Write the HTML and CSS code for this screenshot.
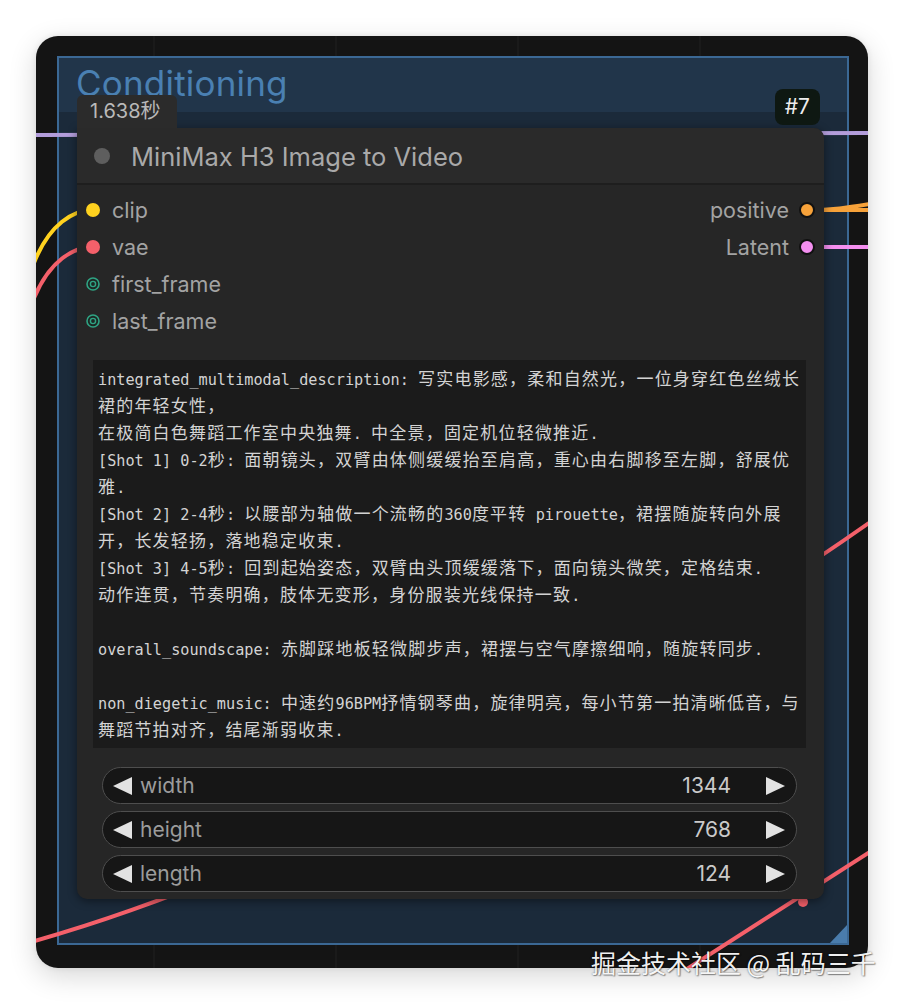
FILE: index.html
```html
<!DOCTYPE html>
<html lang="zh">
<head>
<meta charset="utf-8">
<title>MiniMax H3 Image to Video</title>
<link rel="stylesheet" href="styles.css">
</head>
<body>
<div class="page">
  <div class="frame">
    <div class="group">
      <div class="group-title">Conditioning</div>
      <div class="group-handle"></div>
    </div>

    <svg class="links" width="832" height="932" viewBox="0 0 832 932">
      <path d="M-5 99 L840 97" stroke="#b39ddb" stroke-width="4" fill="none"/>
      <path d="M57 174 C40 174, 12 185, -5 235" stroke="#ffd21f" stroke-width="4" fill="none"/>
      <path d="M57 211 C40 211, 12 222, -5 270" stroke="#f4606a" stroke-width="4" fill="none"/>
      <path d="M771 174 L840 174" stroke="#f7a23a" stroke-width="4" fill="none"/>
      <path d="M771 174 C800 174, 815 171, 840 167" stroke="#f7a23a" stroke-width="4" fill="none"/>
      <path d="M771 211 L840 211" stroke="#f48ff0" stroke-width="4" fill="none"/>
      <path d="M-5 906 C250 835, 600 652, 840 482" stroke="#f4606a" stroke-width="4" fill="none"/>
      <path d="M640 940 L840 812" stroke="#f4606a" stroke-width="4" fill="none"/>
      <circle cx="767" cy="866" r="5" fill="#f4606a"/>
    </svg>

    <div class="node">
      <div class="node-head">
        <div class="timing">1.638秒</div>
        <div class="node-id">#7</div>
      </div>
      <div class="node-box">
        <div class="node-title">
          <span class="title-dot"></span>
          <span class="title-text">MiniMax H3 Image to Video</span>
        </div>
        <div class="node-body">
          <div class="slots">
            <div class="inputs">
              <div class="slot"><span class="dot dot-clip"></span><span class="slot-label">clip</span></div>
              <div class="slot"><span class="dot dot-vae"></span><span class="slot-label">vae</span></div>
              <div class="slot">
                <svg class="ring" width="16" height="16" viewBox="0 0 16 16"><circle cx="8" cy="8" r="6" fill="#1d2824" stroke="#2fa383" stroke-width="1.6"/><circle cx="8" cy="8" r="2.6" fill="none" stroke="#2fa383" stroke-width="1.4"/></svg>
                <span class="slot-label">first_frame</span>
              </div>
              <div class="slot">
                <svg class="ring" width="16" height="16" viewBox="0 0 16 16"><circle cx="8" cy="8" r="6" fill="#1d2824" stroke="#2fa383" stroke-width="1.6"/><circle cx="8" cy="8" r="2.6" fill="none" stroke="#2fa383" stroke-width="1.4"/></svg>
                <span class="slot-label">last_frame</span>
              </div>
            </div>
            <div class="outputs">
              <div class="slot"><span class="slot-label">positive</span><span class="odot odot-pos"></span></div>
              <div class="slot"><span class="slot-label">Latent</span><span class="odot odot-lat"></span></div>
            </div>
          </div>

          <div class="textarea">
<div class="ln">integrated_multimodal_description: <span class="c">写实电影感，柔和自然光，一位身穿红色丝绒长</span></div>
<div class="ln"><span class="c">裙的年轻女性，</span></div>
<div class="ln"><span class="c">在极简白色舞蹈工作室中央独舞</span>. <span class="c">中全景，固定机位轻微推近</span>.</div>
<div class="ln">[Shot 1] 0-2<span class="c">秒</span>: <span class="c">面朝镜头，双臂由体侧缓缓抬至肩高，重心由右脚移至左脚，舒展优</span></div>
<div class="ln"><span class="c">雅</span>.</div>
<div class="ln">[Shot 2] 2-4<span class="c">秒</span>: <span class="c">以腰部为轴做一个流畅的</span>360<span class="c">度平转</span> pirouette<span class="c">，裙摆随旋转向外展</span></div>
<div class="ln"><span class="c">开，长发轻扬，落地稳定收束</span>.</div>
<div class="ln">[Shot 3] 4-5<span class="c">秒</span>: <span class="c">回到起始姿态，双臂由头顶缓缓落下，面向镜头微笑，定格结束</span>.</div>
<div class="ln"><span class="c">动作连贯，节奏明确，肢体无变形，身份服装光线保持一致</span>.</div>
<div class="ln"> </div>
<div class="ln">overall_soundscape: <span class="c">赤脚踩地板轻微脚步声，裙摆与空气摩擦细响，随旋转同步</span>.</div>
<div class="ln"> </div>
<div class="ln">non_diegetic_music: <span class="c">中速约</span>96BPM<span class="c">抒情钢琴曲，旋律明亮，每小节第一拍清晰低音，与</span></div>
<div class="ln"><span class="c">舞蹈节拍对齐，结尾渐弱收束</span>.</div>
          </div>

          <div class="widgets">
            <div class="widget">
              <svg class="arrow" width="19" height="18" viewBox="0 0 19 18"><polygon points="0,9 19,0 19,18" fill="#e2e2e2"/></svg>
              <span class="w-label">width</span>
              <span class="w-value">1344</span>
              <svg class="arrow" width="19" height="18" viewBox="0 0 19 18"><polygon points="19,9 0,0 0,18" fill="#e2e2e2"/></svg>
            </div>
            <div class="widget">
              <svg class="arrow" width="19" height="18" viewBox="0 0 19 18"><polygon points="0,9 19,0 19,18" fill="#e2e2e2"/></svg>
              <span class="w-label">height</span>
              <span class="w-value">768</span>
              <svg class="arrow" width="19" height="18" viewBox="0 0 19 18"><polygon points="19,9 0,0 0,18" fill="#e2e2e2"/></svg>
            </div>
            <div class="widget">
              <svg class="arrow" width="19" height="18" viewBox="0 0 19 18"><polygon points="0,9 19,0 19,18" fill="#e2e2e2"/></svg>
              <span class="w-label">length</span>
              <span class="w-value">124</span>
              <svg class="arrow" width="19" height="18" viewBox="0 0 19 18"><polygon points="19,9 0,0 0,18" fill="#e2e2e2"/></svg>
            </div>
          </div>
        </div>
      </div>
    </div>
  </div>
  <div class="watermark">掘金技术社区 @ 乱码三千</div>
</div>
</body>
</html>
```

FILE: styles.css
```css
html, body {
  margin: 0;
  padding: 0;
  background: #ffffff;
}

body {
  width: 904px;
  height: 1004px;
  overflow: hidden;
  font-family: Inter, "Noto Sans CJK SC", sans-serif;
}

.page {
  position: relative;
  box-sizing: border-box;
  width: 904px;
  height: 1004px;
  padding: 36px 0 0 36px;
}

.frame {
  position: relative;
  width: 832px;
  height: 932px;
  border-radius: 22px;
  overflow: hidden;
  background-color: #141414;
  background-image: linear-gradient(90deg, rgba(255, 255, 255, 0.025) 0 2px, transparent 2px);
  background-size: 182px 100%;
  background-position: 117px 0;
  box-shadow: 0 8px 28px rgba(0, 0, 0, 0.16), 0 0 6px rgba(0, 0, 0, 0.08);
}

/* group */
.group {
  position: absolute;
  left: 21px;
  top: 20px;
  width: 792px;
  height: 889px;
  box-sizing: border-box;
  border: 2px solid #3b6894;
  background: linear-gradient(#21354a 0 54px, #1b2a3a 54px);
}

.group-title {
  padding: 4px 0 0 17px;
  font-size: 35px;
  line-height: 42px;
  color: #4a80b2;
  letter-spacing: 0.2px;
}

.group-handle {
  position: absolute;
  right: 0;
  bottom: 0;
  width: 17px;
  height: 18px;
  background: #4a7cac;
  clip-path: polygon(100% 0, 100% 100%, 0 100%);
}

.links {
  position: absolute;
  left: 0;
  top: 0;
  overflow: visible;
}

/* node */
.node {
  position: absolute;
  left: 41px;
  top: 53px;
  width: 747px;
}

.node-head {
  display: flex;
  align-items: flex-end;
  justify-content: space-between;
  height: 39px;
}

.timing {
  height: 33px;
  box-sizing: border-box;
  padding: 0 16px 0 13px;
  background: #2b2b2b;
  border-radius: 6px 6px 0 0;
  color: #b9b9b9;
  font-size: 20px;
  line-height: 33px;
}

.node-id {
  height: 36px;
  margin: 0 4px 3px 0;
  padding: 0 10px;
  background: #0e1812;
  border-radius: 8px;
  color: #ededed;
  font-size: 21px;
  line-height: 36px;
}

.node-box {
  background: #262626;
  border-radius: 0 10px 10px 10px;
  box-shadow: 0 2px 10px rgba(0, 0, 0, 0.45);
}

.node-title {
  display: flex;
  align-items: center;
  height: 55px;
  padding-left: 17px;
  background: #2a2a2a;
  border-bottom: 2px solid #1e1e1e;
  border-radius: 0 10px 0 0;
}

.title-dot {
  width: 16px;
  height: 16px;
  border-radius: 50%;
  background: #5e5e5e;
  margin-right: 21px;
}

.title-text {
  font-size: 25.5px;
  color: #a9a9a9;
  padding-top: 1px;
}

.node-body {
  padding: 6px 0 7px;
}

.slots {
  display: flex;
  justify-content: space-between;
}

.slot {
  display: flex;
  align-items: center;
  height: 37px;
}

.inputs .slot {
  padding-left: 9px;
}

.outputs .slot {
  justify-content: flex-end;
  padding-right: 9px;
}

.slot-label {
  font-size: 21.5px;
  color: #a3a3a3;
}

.dot {
  width: 14px;
  height: 14px;
  border-radius: 50%;
  margin-right: 12px;
}

.ring {
  margin: 0 11px 0 -1px;
}

.dot-clip { background: #ffd21f; }
.dot-vae { background: #f4606a; }

.odot {
  width: 12px;
  height: 12px;
  border-radius: 50%;
  border: 2px solid #111111;
  margin-left: 10px;
}

.odot-pos { background: #f7a23a; }
.odot-lat { background: #f48ff0; }

/* textarea */
.textarea {
  margin: 21px 18px 0 16px;
  height: 388px;
  box-sizing: border-box;
  padding: 4px 5px;
  background: #1b1b1b;
  color: #d3d3d3;
  font-family: "DejaVu Sans Mono", "Noto Sans CJK SC", monospace;
  font-size: 15.2px;
  line-height: 27px;
  overflow: hidden;
}

.ln {
  white-space: pre;
  height: 27px;
}

.c {
  font-family: "Noto Sans CJK SC", sans-serif;
  font-size: 17px;
  letter-spacing: 1.2px;
}

/* widgets */
.widgets {
  display: flex;
  flex-direction: column;
  gap: 7px;
  margin: 19px 27px 0 25px;
}

.widget {
  display: flex;
  align-items: center;
  height: 37px;
  box-sizing: border-box;
  padding: 0 11px 0 10px;
  border: 1.5px solid #4e4e4e;
  border-radius: 19px;
  background: #161616;
  font-size: 21px;
}

.w-label {
  flex: 1;
  margin-left: 8px;
  color: #9c9c9c;
}

.w-value {
  margin-right: 35px;
  color: #cacaca;
}

.watermark {
  position: absolute;
  left: 591px;
  top: 950px;
  font-family: "Noto Sans CJK SC", sans-serif;
  font-size: 25px;
  line-height: 25px;
  color: rgba(255, 255, 255, 0.95);
  text-shadow: 0 0 2px rgba(0, 0, 0, 0.55), 1px 1px 1px rgba(0, 0, 0, 0.35);
  white-space: nowrap;
}
```
